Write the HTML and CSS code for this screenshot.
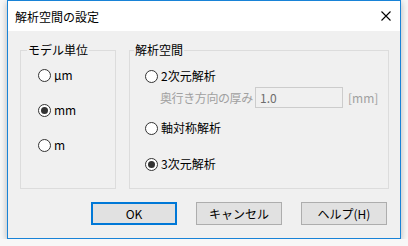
FILE: index.html
```html
<!DOCTYPE html>
<html lang="ja">
<head>
<meta charset="utf-8">
<link rel="stylesheet" href="styles.css">
</head>
<body>
<div class="window">
  <div class="titlebar">
    <span class="title">解析空間の設定</span>
    <svg class="close" width="10" height="10" viewBox="0 0 10 10"><path d="M0.5 0.5L9.5 9.5M9.5 0.5L0.5 9.5" stroke="#000" stroke-width="1.1" fill="none"/></svg>
  </div>
  <div class="content">
    <div class="groups">
      <fieldset class="group group-unit">
        <legend>モデル単位</legend>
        <div class="rows rows-unit">
          <label class="radio-row"><span class="radio"></span><span>μm</span></label>
          <label class="radio-row"><span class="radio checked"></span><span>mm</span></label>
          <label class="radio-row"><span class="radio"></span><span>m</span></label>
        </div>
      </fieldset>
      <fieldset class="group group-space">
        <legend>解析空間</legend>
        <label class="radio-row"><span class="radio"></span><span>2次元解析</span></label>
        <div class="depth-row">
          <span class="depth-label">奥行き方向の厚み</span>
          <span class="depth-input">1.0</span>
          <span class="depth-unit">[mm]</span>
        </div>
        <label class="radio-row row-axis"><span class="radio"></span><span>軸対称解析</span></label>
        <label class="radio-row row-3d"><span class="radio checked"></span><span>3次元解析</span></label>
      </fieldset>
    </div>
    <div class="buttons">
      <button class="btn btn-default">OK</button>
      <button class="btn">キャンセル</button>
      <button class="btn">ヘルプ(H)</button>
    </div>
  </div>
</div>
</body>
</html>
```

FILE: styles.css
```css
* { box-sizing: border-box; }
html, body {
  margin: 0;
  padding: 0;
  background: #f7f7f7;
  font-family: "Noto Sans CJK JP", "Noto Sans", sans-serif;
  font-size: 12px;
  color: #000;
}
.window {
  margin-left: 7px;
  width: 394px;
  height: 239px;
  border: 1px solid #1883d7;
  background: #f0f0f0;
  box-shadow: 0 2px 7px rgba(0, 0, 0, 0.28);
  display: flex;
  flex-direction: column;
}
.titlebar {
  height: 30px;
  background: #ffffff;
  display: flex;
  align-items: center;
  justify-content: space-between;
  padding: 0 9px 0 7px;
}
.title {
  font-size: 12px;
  line-height: 14px;
  padding-top: 1px;
}
.close {
  display: block;
  margin-top: -1px;
}
.content {
  padding: 12px 11px 13px 12px;
  display: flex;
  flex-direction: column;
}
.groups {
  display: flex;
  gap: 13px;
  height: 146px;
}
.group {
  margin: 0;
  border: 1px solid #dcdcdc;
  min-width: 0;
}
.group legend {
  padding: 0 1px;
  line-height: 14px;
  font-size: 12px;
}
.group-unit {
  width: 96px;
  padding: 10px 0 0 17px;
}
.group-unit legend { margin-left: -11px; }
.group-space {
  width: 260px;
  padding: 11px 0 0 15px;
}
.group-space legend { margin-left: -11px; }
.rows-unit {
  display: flex;
  flex-direction: column;
  gap: 19px;
}
.radio-row {
  display: flex;
  align-items: center;
  height: 16px;
  line-height: 16px;
  gap: 3px;
}
.radio {
  width: 13px;
  height: 13px;
  border-radius: 50%;
  border: 1px solid #333;
  background: #fff;
  flex: none;
  display: flex;
  align-items: center;
  justify-content: center;
}
.radio.checked::after {
  content: "";
  width: 7px;
  height: 7px;
  border-radius: 50%;
  background: #333;
}
.depth-row {
  display: flex;
  align-items: center;
  margin-top: 3px;
  padding-left: 15px;
  color: #a0a0a0;
}
.depth-label {
  width: 95px;
  flex: none;
  letter-spacing: -0.4px;
}
.depth-input {
  width: 88px;
  height: 21px;
  border: 1px solid #cccccc;
  background: #f0f0f0;
  color: #6d6d6d;
  padding-left: 4px;
  line-height: 19px;
}
.depth-unit {
  margin-left: 5px;
}
.row-axis { margin-top: 12px; }
.row-3d { margin-top: 20px; }
.buttons {
  margin-top: 13px;
  display: flex;
  justify-content: flex-end;
  gap: 19px;
  padding-right: 2px;
}
.btn {
  width: 86px;
  height: 23px;
  border: 1px solid #adadad;
  background: #e1e1e1;
  font-family: "Noto Sans CJK JP", "Noto Sans", sans-serif;
  font-size: 12px;
  color: #000;
  padding: 0;
  line-height: 20px;
}
.btn-default {
  border: 2px solid #0078d7;
}
```
